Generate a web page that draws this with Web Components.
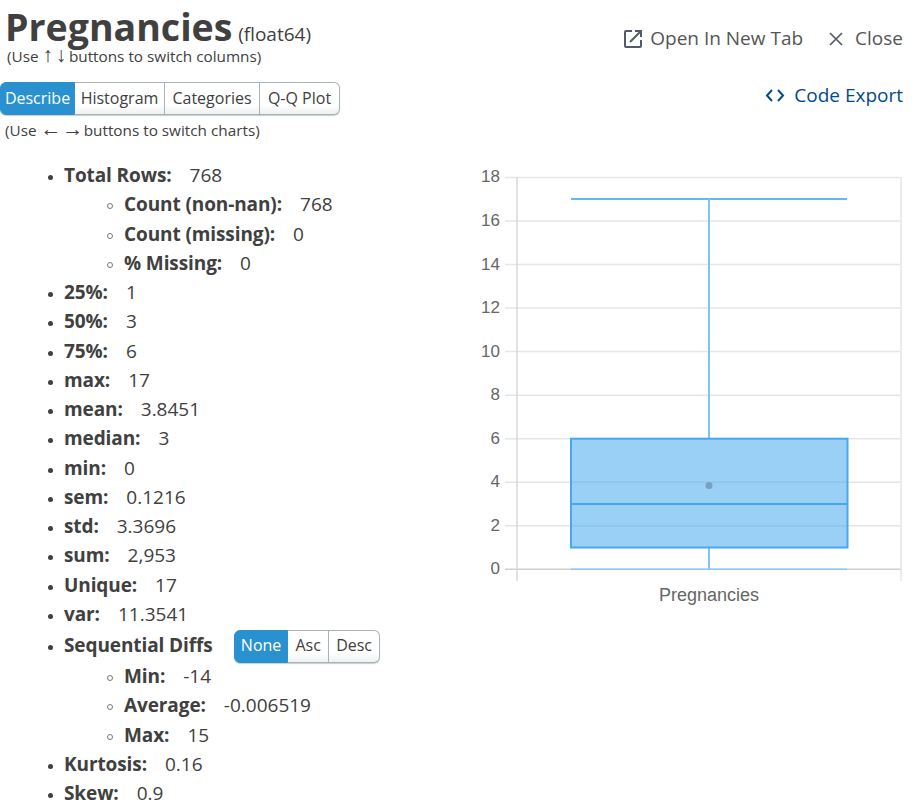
<!DOCTYPE html>
<html>
<head>
<meta charset="utf-8">
<title>Pregnancies</title>
<style>
  html, body { margin: 0; padding: 0; background: #fff; }
  body { font-family: "Open Sans", sans-serif; color: #404040; width: 916px; height: 807px; overflow: hidden; }
</style>
</head>
<body>
<column-page></column-page>

<template id="btn-group-tpl">
  <style>
    :host { display: inline-flex; height: 33px; box-sizing: border-box; border-radius: 6px; box-shadow: 0 1px 1px rgba(0,0,0,.2); }
    ::slotted(group-btn) { border: 1px solid #a7b3b7; border-left-width: 0; }
    ::slotted(group-btn:first-child) { border-radius: 6px 0 0 6px; border-left-width: 1px; }
    ::slotted(group-btn:last-child) { border-radius: 0 6px 6px 0; }
  </style>
  <slot></slot>
</template>

<script>
class GroupBtn extends HTMLElement {
    constructor() {
        super();
        const shadowRoot = this.attachShadow({ mode: 'open' });
        shadowRoot.innerHTML = `
          <style>
              :host {
                display: flex;
                align-items: center;
                justify-content: center;
                box-sizing: border-box;
                padding: 0 0 2px;
                font-size: 16px;
                color: #404040;
                background: linear-gradient(#fff 70%, #eef0f1);
                white-space: nowrap;
              }
              :host([active]) {
                background: #2a91d1;
                border-color: #2a91d1 !important;
                color: #fff;
              }
          </style>
          <slot></slot>
        `;
    }
}
window.customElements.define('group-btn', GroupBtn);

class BtnGroup extends HTMLElement {
    constructor() {
        super();
        const shadowRoot = this.attachShadow({ mode: 'open' });
        shadowRoot.appendChild(document.getElementById('btn-group-tpl').content.cloneNode(true));
    }
}
window.customElements.define('btn-group', BtnGroup);

// shared bullet styles, the default list markers come out too big
const bulletCss = `
  :host {
    display: block;
    font-size: 19px;
    line-height: 29.25px;
    color: #404040;
    white-space: nowrap;
  }
  :host::before {
    content: "";
    display: inline-block;
    box-sizing: border-box;
    width: 5px;
    height: 5px;
    margin-left: -16.5px;
    margin-right: 11.5px;
    vertical-align: 2px;
    border-radius: 50%;
    background: #404040;
  }
  :host([sub]) { margin-left: 60px; }
  :host([sub])::before {
    width: 6px;
    height: 6px;
    margin-left: -17px;
    margin-right: 11px;
    background: transparent;
    border: 1.2px solid #777;
  }
  b { font-weight: 700; letter-spacing: -0.1px; }
`;

class StatRow extends HTMLElement {
    constructor() {
        super();
        const shadowRoot = this.attachShadow({ mode: 'open' });
        // no whitespace in here, it would show up after the ::before bullet
        shadowRoot.innerHTML = `<style>${bulletCss} .value { margin-left: 18px; }</style><b></b><span class="value"></span>`;
    }

    connectedCallback() {
        this.shadowRoot.querySelector('b').textContent = this.getAttribute('label');
        this.shadowRoot.querySelector('.value').textContent = this.getAttribute('value');
    }
}
window.customElements.define('stat-row', StatRow);

class DiffsRow extends HTMLElement {
    constructor() {
        super();
        const shadowRoot = this.attachShadow({ mode: 'open' });
        shadowRoot.innerHTML = `<style>${bulletCss}
              :host { line-height: 33px; height: 33px; }
              .row { display: inline-flex; align-items: flex-start; gap: 21.5px; height: 33px; vertical-align: top; }
              ::slotted(btn-group) { margin-top: 1px; }
          </style><div class="row"><b>Sequential Diffs</b><slot></slot></div>`;
    }
}
window.customElements.define('diffs-row', DiffsRow);

class StatList extends HTMLElement {
    constructor() {
        super();
        const shadowRoot = this.attachShadow({ mode: 'open' });
        shadowRoot.innerHTML = `
          <style>
              :host { display: block; padding-left: 64px; }
          </style>
          <slot></slot>
        `;
    }
}
window.customElements.define('stat-list', StatList);

class BoxChart extends HTMLElement {
    constructor() {
        super();
        const shadowRoot = this.attachShadow({ mode: 'open' });
        const y = v => 569.3 - v * 21.77;
        let grid = '';
        for (let v = 0; v <= 18; v += 2) {
            grid += `<line x1="505" x2="901" y1="${y(v)}" y2="${y(v)}" stroke="${v === 0 ? '#d0d0d0' : '#e6e6e6'}" stroke-width="1.5"/>`;
            grid += `<text x="500" y="${y(v) + 5}" text-anchor="end">${v}</text>`;
        }
        shadowRoot.innerHTML = `
          <style>
              :host { display: block; width: 916px; height: 807px; }
              svg { display: block; }
              text { font-family: "Liberation Sans", Arial, sans-serif; font-size: 17px; fill: #666; }
              text.axis { font-size: 18px; }
          </style>
          <svg width="916" height="807" viewBox="0 0 916 807">
            ${grid}
            <line x1="517" x2="517" y1="177" y2="581" stroke="#d8d8d8" stroke-width="1.5"/>
            <line x1="901" x2="901" y1="177" y2="581" stroke="#e6e6e6" stroke-width="1.5"/>
            <line x1="571" x2="847" y1="199" y2="199" stroke="#64b8f0" stroke-width="2"/>
            <line x1="709" x2="709" y1="199" y2="${y(6)}" stroke="#7cc4fa" stroke-width="2"/>
            <line x1="709" x2="709" y1="${y(1)}" y2="${y(0)}" stroke="#7cc4fa" stroke-width="2"/>
            <line x1="571" x2="847" y1="${y(0)}" y2="${y(0)}" stroke="#90c8ee" stroke-width="1.5"/>
            <rect x="571" y="${y(6)}" width="276.5" height="${y(1) - y(6)}" fill="rgba(54,162,235,.5)" stroke="#45a9ec" stroke-width="2"/>
            <line x1="571" x2="847" y1="${y(3)}" y2="${y(3)}" stroke="#45a9ec" stroke-width="2"/>
            <circle cx="709" cy="485.5" r="3.5" fill="#7a9fc0"/>
            <text class="axis" x="709" y="601" text-anchor="middle">Pregnancies</text>
          </svg>
        `;
    }
}
window.customElements.define('box-chart', BoxChart);

class ColumnHeader extends HTMLElement {
    constructor() {
        super();
        const shadowRoot = this.attachShadow({ mode: 'open' });
        shadowRoot.innerHTML = `
          <style>
              :host { display: block; color: #404040; }
              .top { display: flex; justify-content: space-between; align-items: flex-start; padding: 0 13px 0 5px; }
              h1 { margin: 0; padding-top: 12px; font-size: 37.5px; line-height: 30px; font-weight: 700; white-space: nowrap; }
              h1 small { font-size: 19px; font-weight: 400; margin-left: -4px; }
              .hint { font-size: 15.3px; line-height: 20px; color: #404040; white-space: nowrap; }
              .hint i { font-family: "Liberation Sans", sans-serif; font-style: normal; font-size: 21px; line-height: 0; }
              .hint i.v { letter-spacing: -1.3px; }
              .hint i.h { letter-spacing: -3.4px; }
              .hint.cols { margin: -3px 0 0 2px; }
              .actions { display: flex; gap: 25px; padding-top: 26px; font-size: 19px; line-height: 25px; color: #555; }
              .actions span { display: flex; align-items: center; gap: 8px; white-space: nowrap; }
              .actions span + span { gap: 11px; }
              .actions svg { display: block; }
              .export { display: flex; align-items: center; gap: 9px; margin-top: 1px; color: #004a8f; font-size: 19px; line-height: 25px; white-space: nowrap; }
              .export svg { display: block; }
              .tabs { display: flex; justify-content: space-between; align-items: flex-start; padding: 0 13px 0 0; margin-top: 16px; }
              .hint.charts { margin: 5px 0 0 5px; }
          </style>
          <div class="top">
            <div>
              <h1>Pregnancies <small>(float64)</small></h1>
              <div class="hint cols">(Use <i class="v">↑</i> <i class="v">↓</i> buttons to switch columns)</div>
            </div>
            <div class="actions">
              <span>
                <svg width="18" height="18" viewBox="0 0 18 18" fill="none" stroke="#555b66" stroke-width="2"><path d="M8 1H2a1 1 0 0 0-1 1v14a1 1 0 0 0 1 1h14a1 1 0 0 0 1-1v-6"/><path d="M11 1h6v6M17 1 6 12"/></svg>
                Open In New Tab
              </span>
              <span>
                <svg width="16" height="16" viewBox="0 0 16 16" fill="none" stroke="#555b66" stroke-width="1.7"><path d="M2 2l12 12M14 2 2 14"/></svg>
                Close
              </span>
            </div>
          </div>
          <div class="tabs">
            <btn-group>
              <group-btn active style="width:75px">Describe</group-btn>
              <group-btn style="width:90px">Histogram</group-btn>
              <group-btn style="width:95px">Categories</group-btn>
              <group-btn style="width:80px">Q-Q Plot</group-btn>
            </btn-group>
            <div class="export">
              <svg width="20" height="13" viewBox="0 0 20 13" fill="none" stroke="#004a8f" stroke-width="2"><path d="M7 1 2 6.500l5 5.500M13 1l5 5.500-5 5.500"/></svg>
              Code Export
            </div>
          </div>
          <div class="hint charts">(Use <i class="h">←</i> <i class="h">→</i> buttons to switch charts)</div>
        `;
    }
}
window.customElements.define('column-header', ColumnHeader);

class ColumnPage extends HTMLElement {
    constructor() {
        super();
        const shadowRoot = this.attachShadow({ mode: 'open' });
        shadowRoot.innerHTML = `
          <style>
              :host { display: block; position: relative; width: 916px; height: 807px; overflow: hidden; }
              box-chart { position: absolute; left: 0; top: 0; z-index: 0; }
              .content { position: relative; z-index: 1; }
              stat-list { margin-top: 21px; }
          </style>
          <box-chart></box-chart>
          <div class="content">
            <column-header></column-header>
            <stat-list>
              <stat-row label="Total Rows:" value="768"></stat-row>
              <stat-row sub label="Count (non-nan):" value="768"></stat-row>
              <stat-row sub label="Count (missing):" value="0"></stat-row>
              <stat-row sub label="% Missing:" value="0"></stat-row>
              <stat-row label="25%:" value="1"></stat-row>
              <stat-row label="50%:" value="3"></stat-row>
              <stat-row label="75%:" value="6"></stat-row>
              <stat-row label="max:" value="17"></stat-row>
              <stat-row label="mean:" value="3.8451"></stat-row>
              <stat-row label="median:" value="3"></stat-row>
              <stat-row label="min:" value="0"></stat-row>
              <stat-row label="sem:" value="0.1216"></stat-row>
              <stat-row label="std:" value="3.3696"></stat-row>
              <stat-row label="sum:" value="2,953"></stat-row>
              <stat-row label="Unique:" value="17"></stat-row>
              <stat-row label="var:" value="11.3541"></stat-row>
              <diffs-row>
                <btn-group>
                  <group-btn active style="width:54px">None</group-btn>
                  <group-btn style="width:41px">Asc</group-btn>
                  <group-btn style="width:51px">Desc</group-btn>
                </btn-group>
              </diffs-row>
              <stat-row sub label="Min:" value="-14"></stat-row>
              <stat-row sub label="Average:" value="-0.006519"></stat-row>
              <stat-row sub label="Max:" value="15"></stat-row>
              <stat-row label="Kurtosis:" value="0.16"></stat-row>
              <stat-row label="Skew:" value="0.9"></stat-row>
            </stat-list>
          </div>
        `;
    }
}
window.customElements.define('column-page', ColumnPage);
</script>
</body>
</html>
